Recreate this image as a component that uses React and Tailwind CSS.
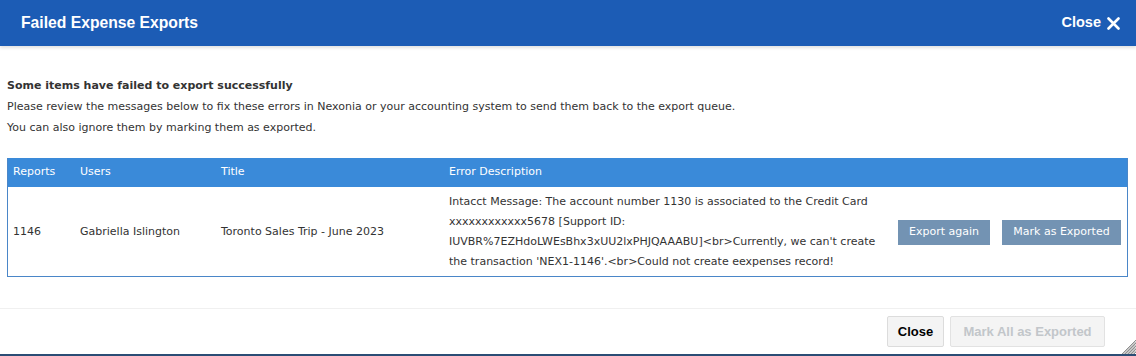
const bodyFont = { fontFamily: '"DejaVu Sans", Verdana, sans-serif' };

const App = () => {
  return (
    <div className="w-[1136px] h-[356px] bg-white flex flex-col overflow-hidden relative">
      <div className="h-[46px] bg-[#1c5cb5] flex items-center justify-between pl-[21px] pr-[16px] shadow-[0_2px_3px_rgba(0,0,0,0.12)] z-10 shrink-0 font-['Liberation_Sans',Arial,sans-serif]">
        <div className="text-white font-bold text-[15.7px]">Failed Expense Exports</div>
        <div className="flex items-center text-white font-bold text-[14.5px] gap-[6px] cursor-pointer">
          Close
          <svg width="13" height="13" viewBox="0 0 13 13">
            <path d="M1.5 1.5 L11.5 11.5 M11.5 1.5 L1.5 11.5" stroke="white" strokeWidth="2.6" strokeLinecap="round" />
          </svg>
        </div>
      </div>

      <div className="pl-[7px] pr-[8px] pt-[29px] text-[11px] text-[#333]" style={bodyFont}>
        <div className="font-bold leading-[21px]">Some items have failed to export successfully</div>
        <div className="leading-[21px]">Please review the messages below to fix these errors in Nexonia or your accounting system to send them back to the export queue.</div>
        <div className="leading-[21px]">You can also ignore them by marking them as exported.</div>

        <div className="mt-[20px] border border-[#4a86c8] border-t-0">
          <div className="h-[29px] bg-[#3a8ad9] flex items-center text-white">
            <div className="w-[66px] pl-[5px]">Reports</div>
            <div className="w-[141px] pl-[6px]">Users</div>
            <div className="w-[228px] pl-[6px]">Title</div>
            <div className="flex-1 pl-[6px]">Error Description</div>
          </div>
          <div className="flex items-center pt-[5px] pb-[4px]">
            <div className="w-[66px] pl-[5px]">1146</div>
            <div className="w-[141px] pl-[6px]">Gabriella Islington</div>
            <div className="w-[228px] pl-[6px]">Toronto Sales Trip - June 2023</div>
            <div className="w-[446px] pl-[6px] leading-[20px] whitespace-nowrap">
              Intacct Message: The account number 1130 is associated to the Credit Card<br />
              xxxxxxxxxxxx5678 [Support ID:<br />
              IUVBR%7EZHdoLWEsBhx3xUU2lxPHJQAAABU]&lt;br&gt;Currently, we can't create<br />
              the transaction 'NEX1-1146'.&lt;br&gt;Could not create eexpenses record!
            </div>
            <div className="flex-1 flex justify-end gap-[12px] pr-[6px]">
              <button className="h-[25px] w-[92px] bg-[#7393b3] text-white">Export again</button>
              <button className="h-[25px] w-[119px] bg-[#7393b3] text-white">Mark as Exported</button>
            </div>
          </div>
        </div>
      </div>

      <div className="mt-auto border-t border-[#f0f0f0] h-[46px] flex items-center justify-end gap-[6px] pr-[31px] font-['Liberation_Sans',Arial,sans-serif]">
        <button className="h-[31px] w-[57px] bg-[#f4f4f4] border border-[#dcdcdc] rounded-[2px] text-[13px] font-bold text-black">Close</button>
        <button className="h-[31px] w-[155px] bg-[#f4f4f4] border border-[#e2e2e2] rounded-[2px] text-[13px] font-bold text-[#c2c6ca]">Mark All as Exported</button>
      </div>
      <div className="h-[2px] bg-[#2b4d75] shrink-0"></div>

      <svg className="absolute right-0 bottom-[2px]" width="14" height="14" viewBox="0 0 14 14">
        <path d="M14 0 L0 14 M14 3 L3 14 M14 6 L6 14 M14 9 L9 14 M14 12 L12 14 M14 1.5 L1.5 14 M14 4.5 L4.5 14 M14 7.5 L7.5 14 M14 10.5 L10.5 14" stroke="#444" strokeWidth="0.6" />
      </svg>
    </div>
  );
};

export default App;
